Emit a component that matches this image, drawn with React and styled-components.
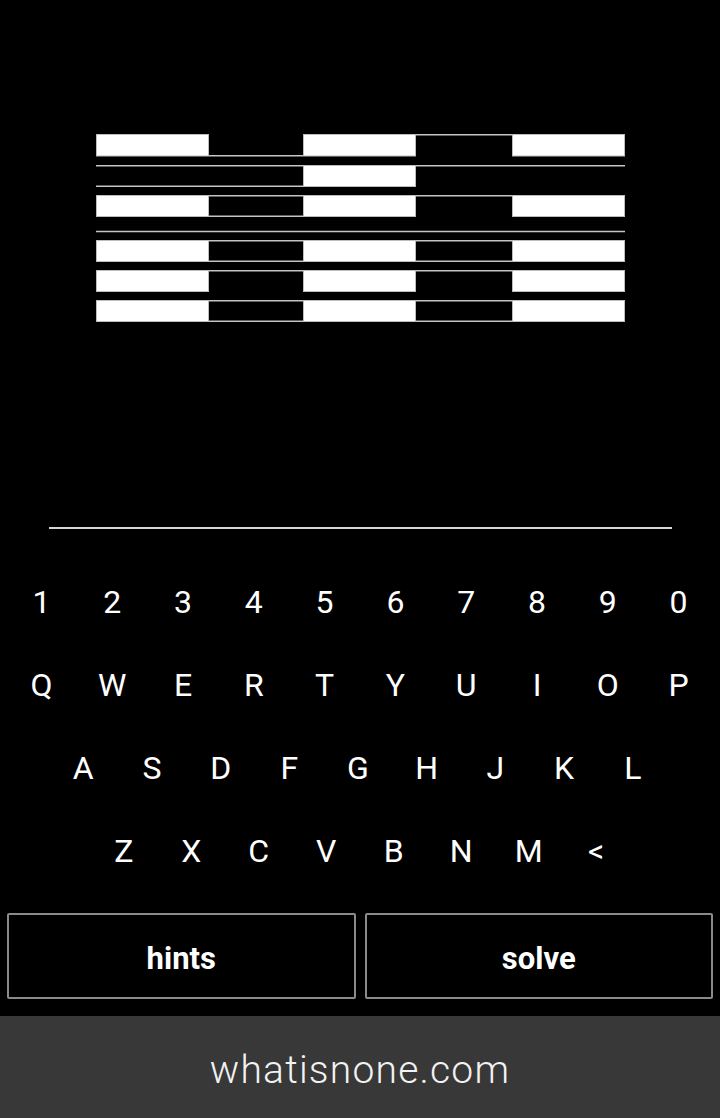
import React, { useState } from 'react';
import styled, { createGlobalStyle } from 'styled-components';

// GLOBAL
const GlobalStyle = createGlobalStyle`
  html, body {
    margin: 0;
    padding: 0;
    background: #000;
  }
  body {
    font-family: Roboto, 'Liberation Sans', sans-serif;
    color: #fff;
  }
`;

// PAGE STYLES
const Page = styled.div`
  display: flex;
  flex-direction: column;
  width: 100%;
  min-height: 1118px;
  background: #000;
`;

const PuzzleArea = styled.div`
  display: flex;
  justify-content: center;
  padding-top: 134px;
  padding-left: 1px;
  svg {
    display: block;
  }
`;

const AnswerInput = styled.input`
  display: block;
  box-sizing: border-box;
  width: 623px;
  height: 46px;
  margin: 159px auto 0;
  padding: 0;
  border: none;
  border-bottom: 2px solid #d6d6d6;
  background: transparent;
  color: #fff;
  font-family: Roboto, 'Liberation Sans', sans-serif;
  font-size: 30px;
  text-align: center;
  outline: none;
`;

// -----------KEYBOARD----------- //

const Keyboard = styled.div`
  display: flex;
  flex-direction: column;
  margin-top: 31.5px;
`;

const KeyRow = styled.div`
  display: grid;
  grid-template-columns: repeat(${(props) => props.$cols}, ${(props) => props.$cell}px);
  justify-content: center;
  height: 83.3px;
  padding-right: ${(props) => props.$nudge || 0}px;
`;

const Key = styled.button`
  border: none;
  background: transparent;
  padding: 0;
  color: #fff;
  font-family: Roboto, 'Liberation Sans', sans-serif;
  font-size: 32px;
  font-weight: 400;
  line-height: 83.3px;
  text-align: center;
  cursor: pointer;
`;

const ButtonBar = styled.div`
  display: grid;
  grid-template-columns: 1fr 1fr;
  gap: 9px;
  padding: 0 7px;
  margin-top: 19.3px;
`;

const ActionButton = styled.button`
  height: 86px;
  box-sizing: border-box;
  border: 2px solid #8a8a8a;
  border-radius: 2px;
  padding: 5px 0 0;
  background: #000;
  color: #fff;
  font-family: Roboto, 'Liberation Sans', sans-serif;
  font-size: 31px;
  font-weight: 700;
  cursor: pointer;
`;

const Footer = styled.footer`
  margin-top: 17px;
  height: 102px;
  background: #383838;
  display: flex;
  align-items: center;
  justify-content: center;
  color: #f2f2f2;
  font-family: Roboto, 'Liberation Sans', sans-serif;
  font-weight: 300;
  font-size: 39px;
  letter-spacing: 1.2px;
  padding-top: 6px;
  box-sizing: border-box;
`;

// styles-end

// puzzle picture: columns and the rows of cells
const COLS = [0, 113, 207, 320, 416, 529];
const LINE = '#c4c4c4';

// W = white block, T = top edge only, B = bottom edge only, TB = both edges
const ROWS = [
  { y: 0, h: 22.5, cells: ['W', 'B', 'W', 'T', 'W'] },
  { y: 31, h: 22, cells: ['TB', 'TB', 'W', 'T', 'T'] },
  { y: 61, h: 22, cells: ['W', 'TB', 'W', 'T', 'W'] },
  { y: 106, h: 22, cells: ['W', 'TB', 'W', 'TB', 'W'] },
  { y: 136, h: 22, cells: ['W', 'T', 'W', 'T', 'W'] },
  { y: 166, h: 22, cells: ['W', 'TB', 'W', 'TB', 'W'] },
];

const Puzzle = () => (
  <svg width="530" height="190" viewBox="0 0 530 190">
    {ROWS.map((row, r) =>
      row.cells.map((cell, c) => {
        const x1 = COLS[c];
        const x2 = COLS[c + 1];
        if (cell === 'W') {
          return (
            <rect
              key={`${r}-${c}`}
              x={x1 + 0.5}
              y={row.y + 0.5}
              width={x2 - x1 - 1}
              height={row.h - 1}
              fill="#fff"
              stroke="#bdbdbd"
              strokeWidth="1"
            />
          );
        }
        return (
          <g key={`${r}-${c}`} stroke={LINE} strokeWidth="1.6">
            {cell.includes('T') && <line x1={x1} x2={x2} y1={row.y + 0.8} y2={row.y + 0.8} />}
            {cell.includes('B') && (
              <line x1={x1} x2={x2} y1={row.y + row.h - 0.8} y2={row.y + row.h - 0.8} />
            )}
          </g>
        );
      })
    )}
    <line x1="0" x2="529" y1="97.5" y2="97.5" stroke={LINE} strokeWidth="1.6" />
  </svg>
);

const KEY_ROWS = [
  { keys: '1234567890'.split(''), cell: 70.8 },
  { keys: 'QWERTYUIOP'.split(''), cell: 70.8 },
  { keys: 'ASDFGHJKL'.split(''), cell: 68.7, nudge: 4 },
  { keys: ['Z', 'X', 'C', 'V', 'B', 'N', 'M', '<'], cell: 67.5 },
];

const App = () => {
  const [answer, setAnswer] = useState('');

  const press = (k) => {
    if (k === '<') setAnswer((a) => a.slice(0, -1));
    else setAnswer((a) => a + k);
  };

  return (
    <Page>
      <GlobalStyle />
      <PuzzleArea>
        <Puzzle />
      </PuzzleArea>

      <AnswerInput value={answer} onChange={(e) => setAnswer(e.target.value)} />

      <Keyboard>
        {KEY_ROWS.map((row, i) => (
          <KeyRow key={i} $cols={row.keys.length} $cell={row.cell} $nudge={row.nudge}>
            {row.keys.map((k) => (
              <Key key={k} onClick={() => press(k)}>
                {k}
              </Key>
            ))}
          </KeyRow>
        ))}
      </Keyboard>

      <ButtonBar>
        <ActionButton>hints</ActionButton>
        <ActionButton>solve</ActionButton>
      </ButtonBar>

      <Footer>whatisnone.com</Footer>
    </Page>
  );
};

export default App;
